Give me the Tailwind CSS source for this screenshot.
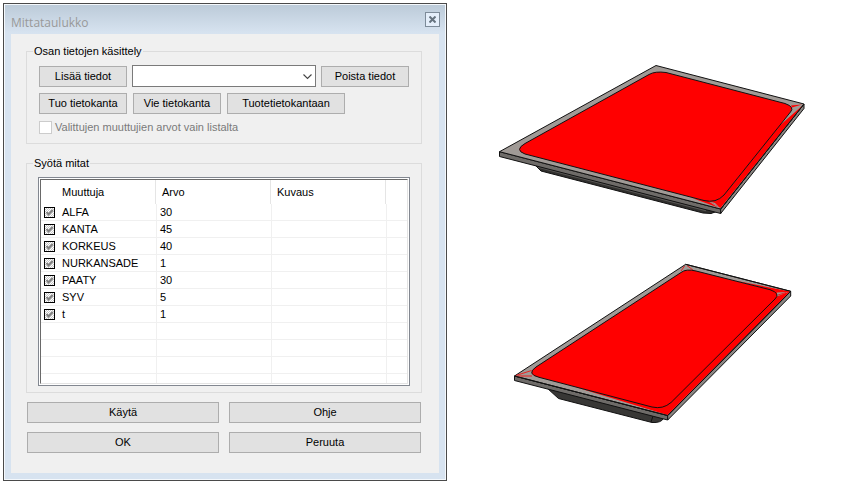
<!DOCTYPE html>
<html lang="fi">
<head>
    <meta charset="UTF-8">
    <meta name="viewport" content="width=device-width, initial-scale=1.0">
    <title>Mittataulukko</title>
    <script src="https://cdn.jsdelivr.net/npm/@tailwindcss/browser@4"></script>
</head>
<body class="bg-white min-h-screen flex items-start font-['Liberation_Sans',Arial,sans-serif] text-[11px] leading-[17px] text-black">

    <!-- Dialog -->
    <div class="w-full max-w-[444px] mt-[3px] ml-[3px] border border-[#4a4a4a] bg-[#f4f8fc] p-px">
        <div class="bg-[#d7e3f0] bg-linear-to-b from-[#bccbd9] to-[#d7e3f0] to-[28px] px-1.5 pb-1.5">
            <header class="h-[29px] flex items-start justify-between">
                <h1 class="font-['Open_Sans',sans-serif] text-[12px] text-[#999999] mt-[9px]">Mittataulukko</h1>
                <button type="button" aria-label="Sulje" class="size-[15px] mt-[7px] -mr-px border border-[#7d8b99] bg-[#e4eefa] flex items-center justify-center">
                    <svg class="size-[7px]" viewBox="0 0 7 7" stroke="#66737f" stroke-width="2"><path d="M0.5 0.5L6.5 6.5M6.5 0.5L0.5 6.5"/></svg>
                </button>
            </header>

            <main class="bg-[#f0f0f0] pt-[9px] pl-[15px] pr-[17px] pb-5">
                <fieldset class="border border-[#dcdcdc] pt-[5px] px-3 pb-[7px]">
                    <legend class="-ml-1.5 px-px">Osan tietojen käsittely</legend>
                    <div class="flex items-end gap-[5px]">
                        <button type="button" class="w-[88px] h-[21px] border border-[#adadad] bg-[#e1e1e1] hover:bg-[#e5f1fb]">Lisää tiedot</button>
                        <div class="relative flex-1">
                            <select aria-label="Tiedot" class="block w-full h-[22px] appearance-none border border-[#7a7a7a] bg-white px-1">
                                <option></option>
                            </select>
                            <svg class="absolute right-1 top-[9px] w-[9px] h-[6px] pointer-events-none" viewBox="0 0 9 6" fill="none" stroke="#444444" stroke-width="1.1"><path d="M0.5 0.5L4.5 4.5L8.5 0.5"/></svg>
                        </div>
                        <button type="button" class="w-[88px] h-[21px] border border-[#adadad] bg-[#e1e1e1] hover:bg-[#e5f1fb]">Poista tiedot</button>
                    </div>
                    <div class="flex gap-1.5 mt-1.5">
                        <button type="button" class="w-[88px] h-[21px] border border-[#adadad] bg-[#e1e1e1] hover:bg-[#e5f1fb]">Tuo tietokanta</button>
                        <button type="button" class="w-[88px] h-[21px] border border-[#adadad] bg-[#e1e1e1] hover:bg-[#e5f1fb]">Vie tietokanta</button>
                        <button type="button" class="w-[118px] h-[21px] border border-[#adadad] bg-[#e1e1e1] hover:bg-[#e5f1fb]">Tuotetietokantaan</button>
                    </div>
                    <label class="flex items-center gap-[3px] mt-[5px] text-[#7a7a7a]">
                        <input type="checkbox" disabled class="appearance-none size-[13px] border border-[#cccccc] bg-white">
                        Valittujen muuttujien arvot vain listalta
                    </label>
                </fieldset>

                <fieldset class="border border-[#dcdcdc] mt-[11px] pt-[5px] px-[11px] pb-1.5">
                    <legend class="-ml-[5px] px-px">Syötä mitat</legend>
                    <div class="border border-[#828790] bg-white p-px">
                        <div class="border border-t-[#696969] border-l-[#696969] border-r-[#e3e3e3] border-b-[#e3e3e3]">
                            <table class="w-full table-fixed border-separate border-spacing-0">
                                <colgroup>
                                    <col class="w-[116px]">
                                    <col class="w-[115px]">
                                    <col class="w-[115px]">
                                    <col>
                                </colgroup>
                                <thead>
                                    <tr class="text-left">
                                        <th class="p-0 font-normal"><div class="h-6 mr-px border-r border-[#e5e5e5] pl-[21px] pt-1">Muuttuja</div></th>
                                        <th class="p-0 font-normal"><div class="h-6 mr-px border-r border-[#e5e5e5] pl-[5px] pt-1">Arvo</div></th>
                                        <th class="p-0 font-normal"><div class="h-6 mr-px border-r border-[#e5e5e5] pl-[5px] pt-1">Kuvaus</div></th>
                                        <td class="p-0"></td>
                                    </tr>
                                </thead>
                                <tbody id="rivit"></tbody>
                            </table>
                        </div>
                    </div>
                </fieldset>

                <div class="grid grid-cols-2 gap-x-2.5 gap-y-[9px] mt-[9px] mx-px">
                    <button type="button" class="h-[21px] border border-[#adadad] bg-[#e1e1e1] hover:bg-[#e5f1fb]">Käytä</button>
                    <button type="button" class="h-[21px] border border-[#adadad] bg-[#e1e1e1] hover:bg-[#e5f1fb]">Ohje</button>
                    <button type="button" class="h-[21px] border border-[#adadad] bg-[#e1e1e1] hover:bg-[#e5f1fb]">OK</button>
                    <button type="button" class="h-[21px] border border-[#adadad] bg-[#e1e1e1] hover:bg-[#e5f1fb]">Peruuta</button>
                </div>
            </main>
        </div>
    </div>

    <!-- Part views -->
    <div class="flex-1 min-w-0">
        <svg class="block w-full" viewBox="447 0 396 242" stroke-linejoin="round" role="img" aria-label="Osa, leveä">
            <!-- underside -->
            <path d="M534 164L541 171L703 213L711 213.500L718 211Z" fill="#31302e" stroke="#111" stroke-width="1"/>
            <path d="M538 167L706 210.500" stroke="#5a5856" stroke-width="1.500"/>
            <!-- flange -->
            <path d="M499.500 151.700L720.700 209V213.500L499.500 156.500Z" fill="#6e6b68" stroke="#111" stroke-width="1"/>
            <path d="M804 104L720.700 209V213.500L804 108.500Z" fill="#8a8683" stroke="#111" stroke-width="1"/>
            <path d="M499.500 151.700L656 65.500L804 104L720.700 209Z" fill="#a09a96" stroke="#111" stroke-width="1"/>
            <path d="M802.500 105.500L778 127L724 195Q718 201 710 201.500L720.500 208Z" fill="#f00"/>
            <path d="M692 198L708 201L718 207.500Z" fill="#f00"/>
            <path d="M791 105.500L802 104.500L792 107.500Z" fill="#f00"/>
            <path d="M710 201.500L715 203L719 207Z" fill="#a09a96"/>
            <!-- face -->
            <path d="M525 143.500L649 74.500Q655 71 666 72.500L785 103.500Q795 107 790.500 112L724 195Q716 203.500 704 200.500L525 154Q514 150 525 143.500Z" fill="#f00" stroke="#111" stroke-width="1"/>
            <path d="M804 104L720.700 209" stroke="#111" stroke-width="1"/>
        </svg>
        <svg class="block w-full" viewBox="447 242 396 243" stroke-linejoin="round" role="img" aria-label="Osa, kapea">
            <!-- underside -->
            <path d="M547 388L558.500 398.500L652 422.500Q661 423 663.500 418.500Z" fill="#383735" stroke="#111" stroke-width="1"/>
            <path d="M653 416L651 422" stroke="#111" stroke-width="1"/>
            <!-- flange -->
            <path d="M514.500 376L667.700 415.500V420L514.500 380.500Z" fill="#6e6b68" stroke="#111" stroke-width="1"/>
            <path d="M790.700 291.300L667.700 415.500V420L790.700 296Z" fill="#8a8683" stroke="#111" stroke-width="1"/>
            <path d="M514.500 376L685.700 264.300L790.700 291.300L667.700 415.500Z" fill="#a09a96" stroke="#111" stroke-width="1"/>
            <path d="M735 280.500L790 291.500L667.500 415L575 387L653 406L670 402L776 297L770 290Z" fill="#f00"/>
            <path d="M777 292.500L788 292L777 296.500Z" fill="#a09a96"/>
            <path d="M778 295L786 292.500M681 271L684.500 266M687 265.500L693.500 270.500M516 375.500L531.500 370.500M518 376L532 376" fill="none" stroke="#f00" stroke-width="0.800"/>
            <!-- face -->
            <path d="M536 367L681 272.500Q686 268.500 696 271L770 289.700Q781 293.500 775 299L671 402.500Q663 409.500 652 407L539 377.300Q526 374 536 367Z" fill="#f00" stroke="#111" stroke-width="1"/>
            <path d="M685.700 264.300L790.700 291.300L667.700 415.500L514.500 376" fill="none" stroke="#111" stroke-width="1"/>
        </svg>
    </div>

    <script>
        const muuttujat = [
            ['ALFA', 30],
            ['KANTA', 45],
            ['KORKEUS', 40],
            ['NURKANSADE', 1],
            ['PAATY', 30],
            ['SYV', 5],
            ['t', 1]
        ];
        const rivit = document.getElementById('rivit');

        muuttujat.forEach(([nimi, arvo]) => {
            rivit.innerHTML += `
                <tr>
                    <td class="p-0 h-[17px] border-b border-r border-[#f0f0f0]">
                        <label class="flex items-center gap-[7px] pl-[3px] h-4">
                            <span class="relative size-[11px]">
                                <input type="checkbox" checked class="block appearance-none size-[11px] border border-black bg-[repeating-conic-gradient(#c8c8c8_0_25%,#ffffff_0_50%)] bg-[length:2px_2px]">
                                <svg class="absolute inset-0 size-[11px] pointer-events-none" viewBox="0 0 11 11" fill="none" stroke="#808080" stroke-width="2"><path d="M2.500 5L4.500 7.500L8.800 3"/></svg>
                            </span>
                            ${nimi}
                        </label>
                    </td>
                    <td class="p-0 pl-[3px] border-b border-r border-[#f0f0f0] leading-4">${arvo}</td>
                    <td class="p-0 border-b border-r border-[#f0f0f0]"></td>
                    <td class="p-0 border-b border-[#f0f0f0]"></td>
                </tr>`;
        });

        // empty rows down to the bottom of the list
        for (let i = 0; i < 3; i++) {
            rivit.innerHTML += `
                <tr>
                    <td class="p-0 h-[17px] border-b border-r border-[#f0f0f0]"></td>
                    <td class="p-0 border-b border-r border-[#f0f0f0]"></td>
                    <td class="p-0 border-b border-r border-[#f0f0f0]"></td>
                    <td class="p-0 border-b border-[#f0f0f0]"></td>
                </tr>`;
        }
        rivit.innerHTML += `
            <tr>
                <td class="p-0 h-[9px] border-r border-[#f0f0f0]"></td>
                <td class="p-0 border-r border-[#f0f0f0]"></td>
                <td class="p-0 border-r border-[#f0f0f0]"></td>
                <td class="p-0"></td>
            </tr>`;
    </script>
</body>
</html>
